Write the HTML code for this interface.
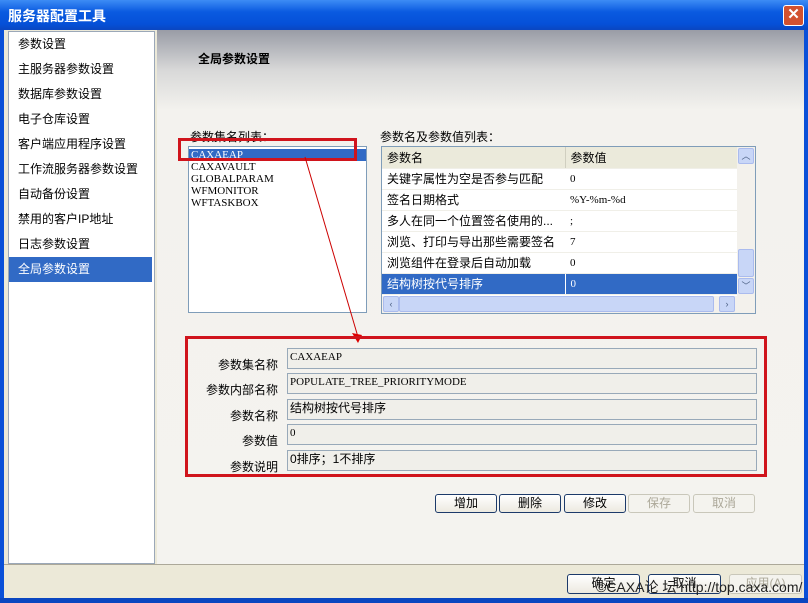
<!DOCTYPE html>
<html><head><meta charset="utf-8"><style>
*{margin:0;padding:0;box-sizing:border-box}
body{width:808px;height:603px;overflow:hidden;background:#ece9d8;font-family:"Liberation Sans","Noto Sans CJK SC",sans-serif;font-size:12px;color:#000;position:relative}
.a{position:absolute}
.mono{font-family:"Liberation Serif","Noto Serif CJK SC",serif;font-size:11px}
.title{left:0;top:0;width:808px;height:30px;background:linear-gradient(#3d8cf5,#0a5ae0 40%,#0550d8 80%,#0a46c0);color:#fff;font-weight:bold;font-size:14px;padding:6px 0 0 8px}
.close{left:783px;top:5px;width:21px;height:21px;background:#d2512f;border:1px solid #fff;border-radius:3px;color:#fff;font-size:15px;text-align:center;line-height:18px;font-weight:bold}
.left{left:8px;top:31px;width:147px;height:533px;background:#fff;border:1px solid #9ba8b8}
.left div{height:25px;line-height:25px;padding-left:9px;font-size:12px}
.sel{background:#316ac5;color:#fff;margin:0 2px 0 0}
.right{left:157px;top:30px;width:647px;height:534px;background:linear-gradient(#999ca6 0,#d8d8d8 40px,#f3f2ee 80px,#f4f3ef)}
.btn{height:19px;border:1px solid #1c3a6a;border-radius:3px;background:linear-gradient(#fff,#ece9e0);text-align:center;line-height:17px;font-size:12px}
.dis{border-color:#c9c7ba;color:#aca899;background:#f4f3ee}
.field{left:287px;width:470px;height:21px;border:1px solid #98a9b9;background:#f0efea;padding-left:2px;line-height:17px}
.lab{width:100px;text-align:right;left:178px}
td{height:21px;border-bottom:1px solid #f0efe8;padding-left:5px}
.sb{width:16px;height:16px;background:#c8d6f7;border:1px solid #aabbee;border-radius:2px;font-size:9px;color:#4d6185;text-align:center;line-height:14px}
</style></head><body>
<div class="a title">服务器配置工具</div>
<div class="a close">✕</div>
<div class="a" style="left:0;top:30px;width:4px;height:573px;background:#0a50d8"></div>
<div class="a" style="left:804px;top:30px;width:4px;height:573px;background:#0a50d8"></div>
<div class="a left">
<div>参数设置</div><div>主服务器参数设置</div><div>数据库参数设置</div><div>电子仓库设置</div><div>客户端应用程序设置</div><div>工作流服务器参数设置</div><div>自动备份设置</div><div>禁用的客户IP地址</div><div>日志参数设置</div><div class="sel">全局参数设置</div>
</div>
<div class="a right"></div>
<div class="a" style="left:198px;top:50px;font-weight:bold;font-size:12px">全局参数设置</div>
<div class="a" style="left:190px;top:128px">参数集名列表：</div>
<div class="a" style="left:380px;top:128px">参数名及参数值列表：</div>
<div class="a mono" style="left:188px;top:146px;width:179px;height:167px;background:#fff;border:1px solid #7f9db9;line-height:12px;padding-top:2px">
<div style="background:#316ac5;color:#fff;padding-left:2px">CAXAEAP</div>
<div style="padding-left:2px">CAXAVAULT<br>GLOBALPARAM<br>WFMONITOR<br>WFTASKBOX</div></div>
<div class="a" style="left:178px;top:138px;width:179px;height:23px;border:3px solid #d0141c"></div>
<div class="a" style="left:381px;top:146px;width:375px;height:168px;background:#fff;border:1px solid #7f9db9;overflow:hidden">
<table style="border-collapse:collapse;width:355px;font-size:12px">
<tr style="background:#ebeadb"><td style="width:183px;border-right:1px solid #d0cfc0">参数名</td><td>参数值</td></tr>
<tr><td>关键字属性为空是否参与匹配</td><td class="mono">0</td></tr>
<tr><td>签名日期格式</td><td class="mono">%Y-%m-%d</td></tr>
<tr><td>多人在同一个位置签名使用的...</td><td class="mono">;</td></tr>
<tr><td>浏览、打印与导出那些需要签名</td><td class="mono">7</td></tr>
<tr><td>浏览组件在登录后自动加载</td><td class="mono">0</td></tr>
<tr style="background:#316ac5;color:#fff"><td style="border-right:1px solid #fff">结构树按代号排序</td><td class="mono">0</td></tr>
</table>
<div class="a" style="left:355px;top:0;width:18px;height:149px;background:#f3f1ec">
<div class="a sb" style="left:1px;top:1px">︿</div>
<div class="a" style="left:1px;top:102px;width:16px;height:28px;background:#c8d6f7;border:1px solid #aabbee;border-radius:2px"></div>
<div class="a sb" style="left:1px;top:131px">﹀</div></div>
<div class="a" style="left:0;top:149px;width:373px;height:17px;background:#f3f1ec">
<div class="a sb" style="left:1px;top:0">‹</div>
<div class="a" style="left:17px;top:0;width:315px;height:16px;background:#c8d6f7;border:1px solid #aabbee;border-radius:2px"></div>
<div class="a sb" style="left:337px;top:0">›</div></div>
</div>
<svg class="a" style="left:300px;top:155px" width="70" height="190"><line x1="5" y1="2" x2="58" y2="182" stroke="#c00" stroke-width="1"/><polygon points="52,178 62,180 58,188" fill="#d00"/></svg>
<div class="a" style="left:185px;top:336px;width:582px;height:141px;border:3px solid #d0141c"></div>
<div class="a lab" style="top:356px">参数集名称</div>
<div class="a lab" style="top:381px">参数内部名称</div>
<div class="a lab" style="top:407px">参数名称</div>
<div class="a lab" style="top:432px">参数值</div>
<div class="a lab" style="top:458px">参数说明</div>
<div class="a field mono" style="top:348px">CAXAEAP</div>
<div class="a field mono" style="top:373px">POPULATE_TREE_PRIORITYMODE</div>
<div class="a field" style="top:399px">结构树按代号排序</div>
<div class="a field mono" style="top:424px">0</div>
<div class="a field" style="top:450px">0排序；1不排序</div>
<div class="a btn" style="left:435px;top:494px;width:62px">增加</div>
<div class="a btn" style="left:499px;top:494px;width:62px">删除</div>
<div class="a btn" style="left:564px;top:494px;width:62px">修改</div>
<div class="a btn dis" style="left:628px;top:494px;width:62px">保存</div>
<div class="a btn dis" style="left:693px;top:494px;width:62px">取消</div>
<div class="a" style="left:4px;top:564px;width:800px;height:1px;background:#aca899"></div>
<div class="a btn" style="left:567px;top:574px;width:73px;height:20px">确定</div>
<div class="a btn" style="left:648px;top:574px;width:73px;height:20px">取消</div>
<div class="a btn dis" style="left:729px;top:574px;width:73px;height:20px">应用(A)</div>
<div class="a" style="left:596px;top:577px;font-size:14px;color:#222">©CAXA论 坛 http://top.caxa.com/</div>
<div class="a" style="left:0;top:598px;width:808px;height:5px;background:#0a46c0"></div>
</body></html>
